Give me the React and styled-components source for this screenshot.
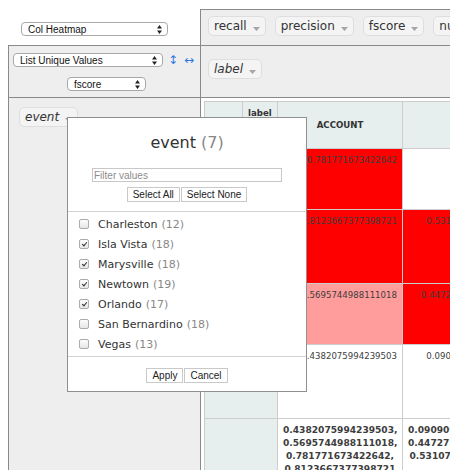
import React from "react";
import styled, { createGlobalStyle } from "styled-components";

const GlobalStyle = createGlobalStyle`
  html, body {
    margin: 0;
    padding: 0;
    background: #fff;
    overflow: hidden;
  }
  body {
    font-family: "DejaVu Sans", Verdana, sans-serif;
    color: #333;
  }
`;

const Page = styled.div`
  position: relative;
  padding: 9px 0 0 8px;
`;

const Ui = styled.div`
  display: grid;
  grid-template-columns: 192px minmax(0, 1fr);
  grid-template-rows: 36px 52px 1fr;
  min-height: calc(100vh - 9px);
`;

const RendererCell = styled.div`
  background: #fff;
  padding: 13px 0 0 13px;
`;

const AxisCell = styled.div`
  background: ${(p) => (p.$white ? "#fff" : "#eee")};
  border-top: 1px solid #8a8a8a;
  border-left: 1px solid #8a8a8a;
  padding: ${(p) => p.$pad};
  display: flex;
  flex-direction: ${(p) => (p.$column ? "column" : "row")};
  align-items: flex-start;
  gap: 9px;
  white-space: nowrap;
  min-width: 0;
`;

const SelectBox = styled.div`
  display: flex;
  align-items: center;
  justify-content: space-between;
  box-sizing: border-box;
  width: ${(p) => p.$width}px;
  height: 14px;
  padding: 0 5px 0 6px;
  border: 1px solid #a8a8a8;
  border-radius: 4px;
  background: #fff;
  font-family: "Liberation Sans", Arial, sans-serif;
  font-size: 10px;
  color: #111;
  flex: none;
`;

const ValsRow = styled.div`
  display: flex;
  align-items: center;
  align-self: stretch;
  justify-content: ${(p) => (p.$center ? "center" : "flex-start")};
  margin-top: ${(p) => p.$top || 0}px;
`;

const OrderLink = styled.a`
  display: inline-flex;
  justify-content: center;
  align-items: center;
  width: 12px;
  height: 14px;
  margin-left: 4px;
  font-size: 12px;
  color: #2f78e0;
  cursor: pointer;
`;

const Pill = styled.span`
  display: inline-flex;
  align-items: center;
  box-sizing: border-box;
  height: 20px;
  padding: 0 5px;
  background: #f4f4f4;
  border: 1px solid #dedede;
  border-radius: 5px;
  font-size: 12px;
  font-style: ${(p) => (p.$italic ? "italic" : "normal")};
  color: #333;
  white-space: nowrap;
  flex: none;
`;

const Triangle = styled.svg`
  margin: 6px 0 0 6px;
  flex: none;
`;

const FilterBox = styled.div`
  position: absolute;
  left: 67px;
  top: 117px;
  width: 240px;
  box-sizing: border-box;
  background: #fff;
  border: 1px solid #8f8f8f;
  display: flex;
  flex-direction: column;
  align-items: center;
  padding-bottom: 8px;
  z-index: 10;
`;

const FilterTitle = styled.h4`
  margin: 15px 0 0;
  font-size: 16px;
  line-height: 19px;
  font-weight: normal;
  color: #333;
`;

const Count = styled.span`
  color: #888;
  margin-left: ${(p) => p.$gap || 4}px;
`;

const FilterInput = styled.input`
  box-sizing: border-box;
  width: 190px;
  height: 14px;
  margin-top: 16px;
  padding: 0 1px;
  border: 1px solid #c8c8c8;
  font-family: "Liberation Sans", Arial, sans-serif;
  font-size: 10px;
  outline: none;
  &::placeholder {
    color: #8d8d8d;
  }
`;

const ButtonRow = styled.div`
  display: flex;
  gap: 1px;
  margin-top: ${(p) => p.$top}px;
`;

const Button = styled.button`
  box-sizing: border-box;
  height: 15px;
  padding: 0 5px;
  border: 1px solid #c9c9c9;
  background: #fff;
  font-family: "Liberation Sans", Arial, sans-serif;
  font-size: 10px;
  line-height: 13px;
  color: #222;
`;

const CheckList = styled.div`
  align-self: stretch;
  margin-top: 9px;
  padding: 2px 0;
  border-top: 1px solid #d3d3d3;
  border-bottom: 1px solid #d3d3d3;
`;

const CheckItem = styled.label`
  display: flex;
  align-items: center;
  height: 20px;
  padding-left: 11px;
  font-size: 11px;
  color: #333;
`;

const Check = styled.input`
  appearance: none;
  box-sizing: border-box;
  position: relative;
  width: 10px;
  height: 10px;
  margin: 0 9px 0 0;
  border: 1px solid #ababab;
  border-radius: 2px;
  background: linear-gradient(#fdfdfd, #e6e6e6);
  &:checked::after {
    content: "";
    position: absolute;
    left: 2.5px;
    top: 0.5px;
    width: 2px;
    height: 4px;
    border: solid #333;
    border-width: 0 1.5px 1.5px 0;
    transform: rotate(40deg);
  }
`;

const PivotTable = styled.table`
  flex: none;
  border-collapse: collapse;
  table-layout: fixed;
  width: 323px;
  font-family: "DejaVu Sans", Verdana, sans-serif;
  font-size: 8.6px;
  line-height: 12.7px;
  color: #3d3d3d;
`;

const Th = styled.th`
  background: #e6eeee;
  border: 1px solid #cdcdcd;
  padding: 5px;
  font-weight: bold;
  text-align: ${(p) => p.$align || "left"};
  vertical-align: ${(p) => p.$valign || "middle"};
  color: #333;
`;

const Td = styled.td`
  background: ${(p) => p.$heat || "#fff"};
  border: 1px solid #cdcdcd;
  padding: 5px;
  text-align: right;
  vertical-align: top;
  white-space: nowrap;
`;

const TotalTd = styled(Td)`
  font-weight: bold;
  font-size: 9.1px;
  text-align: center;
`;

const Row = styled.tr`
  height: ${(p) => p.$h}px;
`;

const UpDown = () => (
  <svg width="5" height="9" viewBox="0 0 5 9">
    <path d="M2.5 0 L5 3.4 H0 Z M2.5 9 L0 5.6 H5 Z" fill="#222" />
  </svg>
);

const Caret = () => (
  <Triangle width="7" height="4" viewBox="0 0 7 4">
    <path d="M0 0 H7 L3.5 4 Z" fill="#a5a5a5" />
  </Triangle>
);

const RED = "#ff0000";
const PINK = "#ff9c9c";

const rows = [
  { label: "Isla Vista", h: 61, c: ["0.781771673422642", RED], d: ["", "#fff"] },
  { label: "Marysville", h: 74, c: ["0.8123667377398721", RED], d: ["0.5310734463276836", RED] },
  { label: "Newtown", h: 61, c: ["0.5695744988111018", PINK], d: ["0.44727272727272727", RED] },
  { label: "Orlando", h: 74, c: ["0.4382075994239503", "#fff"], d: ["0.0909090909090909", "#fff"] },
];

const values = [
  ["Charleston", 12, false],
  ["Isla Vista", 18, true],
  ["Marysville", 18, true],
  ["Newtown", 19, true],
  ["Orlando", 17, true],
  ["San Bernardino", 18, false],
  ["Vegas", 13, false],
];

const lines = (list) =>
  list.map((v, i) => (
    <React.Fragment key={v}>
      {v}
      {i < list.length - 1 ? "," : ""}
      {i < list.length - 1 && <br />}
    </React.Fragment>
  ));

const App = () => {
  return (
    <Page>
      <GlobalStyle />
      <Ui>
        <RendererCell>
          <SelectBox $width={147}>
            Col Heatmap
            <UpDown />
          </SelectBox>
        </RendererCell>

        <AxisCell $pad="6px 0 0 7px">
          <Pill>recall<Caret /></Pill>
          <Pill>precision<Caret /></Pill>
          <Pill>fscore<Caret /></Pill>
          <Pill>num_docs<Caret /></Pill>
        </AxisCell>

        <AxisCell $pad="7px 0 0 4px" $column>
          <ValsRow>
            <SelectBox $width={150}>
              List Unique Values
              <UpDown />
            </SelectBox>
            <OrderLink>↕</OrderLink>
            <OrderLink>↔</OrderLink>
          </ValsRow>
          <ValsRow $center $top={1}>
            <SelectBox $width={79}>
              fscore
              <UpDown />
            </SelectBox>
          </ValsRow>
        </AxisCell>

        <AxisCell $pad="13px 0 0 7px">
          <Pill $italic>label<Caret /></Pill>
        </AxisCell>

        <AxisCell $pad="9px 0 0 10px">
          <Pill $italic>event<Caret /></Pill>
        </AxisCell>

        <AxisCell $pad="3px 0 0 3px" $white>
          <PivotTable>
            <colgroup>
              <col style={{ width: 38 }} />
              <col style={{ width: 35 }} />
              <col style={{ width: 125 }} />
              <col style={{ width: 125 }} />
            </colgroup>
            <thead>
              <Row $h={22}>
                <Th />
                <Th>label</Th>
                <Th rowSpan={2} $align="center">ACCOUNT</Th>
                <Th rowSpan={2} $align="center" />
              </Row>
              <Row $h={22}>
                <Th>event</Th>
                <Th />
              </Row>
            </thead>
            <tbody>
              {rows.map((r) => (
                <Row key={r.label} $h={r.h}>
                  <Th colSpan={2} $valign="top">{r.label}</Th>
                  <Td $heat={r.c[1]}>{r.c[0]}</Td>
                  <Td $heat={r.d[1]}>{r.d[0]}</Td>
                </Row>
              ))}
              <Row $h={61}>
                <Th colSpan={2} />
                <TotalTd>
                  {lines([
                    "0.4382075994239503",
                    "0.5695744988111018",
                    "0.781771673422642",
                    "0.8123667377398721",
                  ])}
                </TotalTd>
                <TotalTd>
                  {lines(["0.0909090909090909", "0.44727272727272727", "0.5310734463276836"])}
                </TotalTd>
              </Row>
            </tbody>
          </PivotTable>
        </AxisCell>
      </Ui>

      <FilterBox>
        <FilterTitle>
          event<Count $gap={5}>(7)</Count>
        </FilterTitle>
        <FilterInput placeholder="Filter values" />
        <ButtonRow $top={5}>
          <Button>Select All</Button>
          <Button>Select None</Button>
        </ButtonRow>
        <CheckList>
          {values.map(([name, n, on]) => (
            <CheckItem key={name}>
              <Check type="checkbox" defaultChecked={on} />
              {name}
              <Count>({n})</Count>
            </CheckItem>
          ))}
        </CheckList>
        <ButtonRow $top={11}>
          <Button>Apply</Button>
          <Button>Cancel</Button>
        </ButtonRow>
      </FilterBox>
    </Page>
  );
};

export default App;
